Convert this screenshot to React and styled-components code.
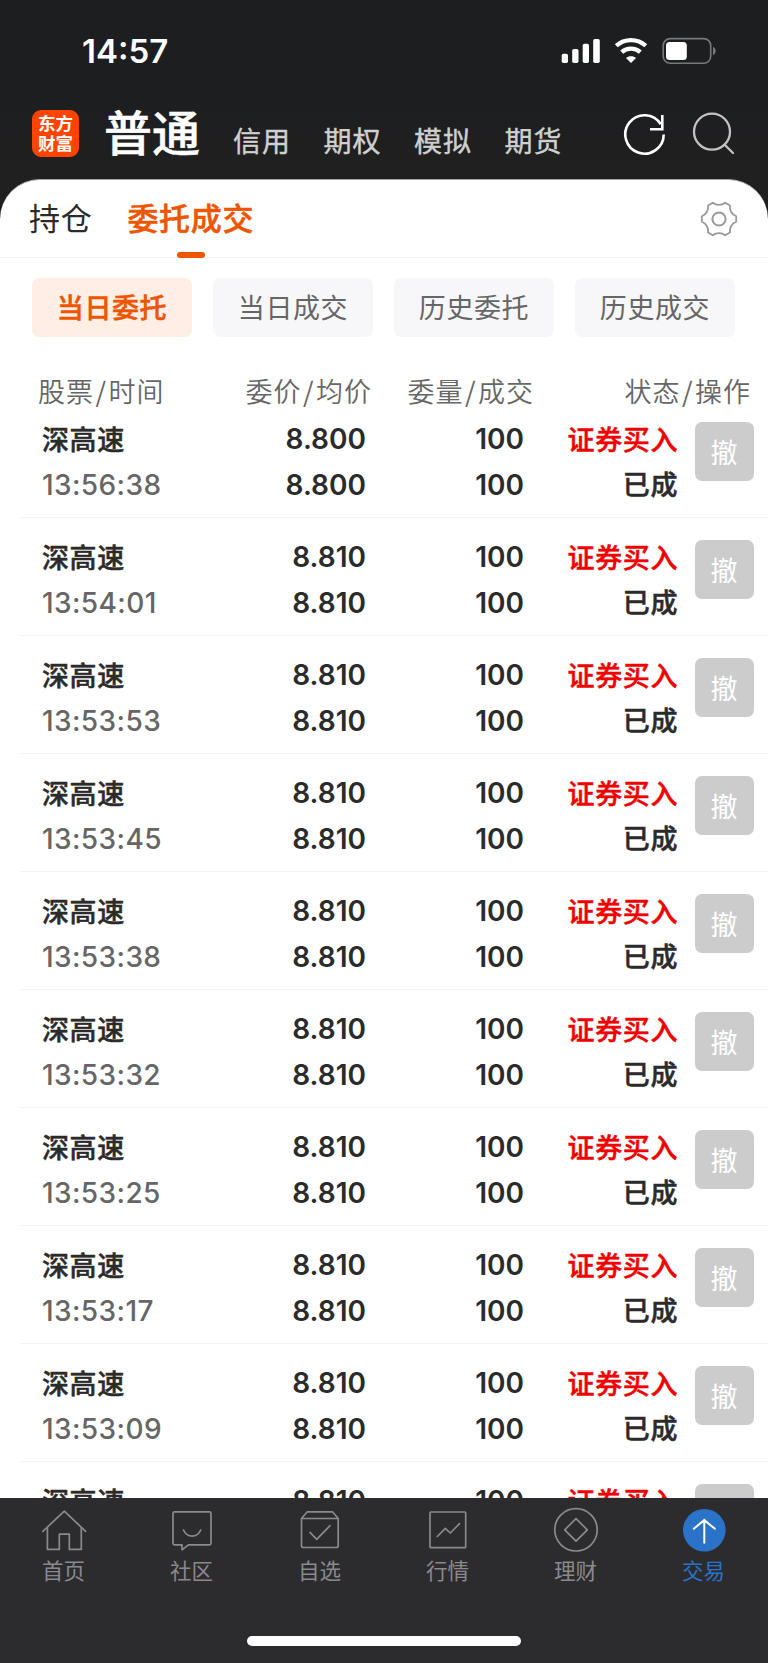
import React from "react";
import styled, { createGlobalStyle, css } from "styled-components";

const orders = [
  { time: "13:56:38", price: "8.800" },
  { time: "13:54:01", price: "8.810" },
  { time: "13:53:53", price: "8.810" },
  { time: "13:53:45", price: "8.810" },
  { time: "13:53:38", price: "8.810" },
  { time: "13:53:32", price: "8.810" },
  { time: "13:53:25", price: "8.810" },
  { time: "13:53:17", price: "8.810" },
  { time: "13:53:09", price: "8.810" },
  { time: "13:53:02", price: "8.810" },
];

const markets = ["信用", "期权", "模拟", "期货"];
const filters = ["当日委托", "当日成交", "历史委托", "历史成交"];
const columns = [
  ["股票", "时间"],
  ["委价", "均价"],
  ["委量", "成交"],
  ["状态", "操作"],
];

const tabs = [
  {
    label: "首页",
    icon: (
      <>
        <path d="M2.9 25.3 24.3 5.2 45.6 25.3" />
        <path d="M7.4 21.8v21.6h11.9V28.2h10v15.2h12V21.8" />
      </>
    ),
  },
  {
    label: "社区",
    icon: (
      <>
        <path d="M6.5 5.8h35a1.5 1.5 0 0 1 1.5 1.5v30a1.5 1.5 0 0 1-1.5 1.5H20.4L14 43.8v-5H6.5A1.5 1.5 0 0 1 5 37.3v-30a1.5 1.5 0 0 1 1.5-1.5z" />
        <path d="M15.5 24c3.6 8.3 13.6 8.3 17.2 0" />
      </>
    ),
  },
  {
    label: "自选",
    icon: (
      <>
        <path d="M5.5 12.5v27a2 2 0 0 0 2 2h32.700a2 2 0 0 0 2-2v-27zl5.800-6.700h25.200l5.700 6.700" />
        <path d="m14 26.300 6.700 7L34 19.700" />
      </>
    ),
  },
  {
    label: "行情",
    icon: (
      <>
        <rect x="6" y="6" width="35.7" height="35.7" rx="1" />
        <path d="m13.300 30.500 8-8.200 5 4.700 9.200-9.300" />
      </>
    ),
  },
  {
    label: "理财",
    icon: (
      <>
        <circle cx="24" cy="23.8" r="21.2" />
        <path d="M24 12.600 35.300 23.900 24 35.200 12.700 23.900z" />
      </>
    ),
  },
  {
    label: "交易",
    active: true,
    icon: (
      <>
        <circle cx="24.3" cy="24.2" r="21.3" fill="#2a73c8" stroke="none" />
        <path d="M24.300 36.700V13.800M13.800 22.800l10.500-8.800 10.500 8.800" stroke="#fff" strokeWidth="2" />
      </>
    ),
  },
];

// six teeth, with a shallow curve between each pair
const gearPath = () => {
  const at = (deg, r) => {
    const a = (deg * Math.PI) / 180;
    return `${(20 + r * Math.cos(a)).toFixed(2)} ${(20 + r * Math.sin(a)).toFixed(2)}`;
  };
  let d = "";
  for (let i = 0; i < 6; i++) {
    const c = i * 60;
    d += `${i ? "L" : "M"}${at(c - 9, 17.4)}L${at(c + 9, 17.4)}`;
    d += `C${at(c + 19, 13.6)} ${at(c + 41, 13.6)} ${at(c + 51, 17.4)}`;
  }
  return d + "z";
};

const StatusBar = () => (
  <Status>
    <Clock>14:57</Clock>
    <StatusIcons width="156" height="28" viewBox="0 0 156 28">
      <g fill="#fff">
        <rect x="1.7" y="16.8" width="6.3" height="9.2" rx="1.8" />
        <rect x="12.2" y="12" width="6.3" height="14" rx="1.8" />
        <rect x="22.7" y="6.8" width="6.3" height="19.2" rx="1.8" />
        <rect x="33.2" y="2" width="6.6" height="24" rx="1.8" />
        <path d="M71 26l-5-4.900c2.700-2.600 7.300-2.600 10 0z" />
        <rect x="106" y="5" width="20.8" height="18" rx="3.5" />
      </g>
      <path d="M56.300 8.800c8.100-7.700 21.300-7.700 29.400 0M61.700 15.200c5.200-4.800 13.400-4.800 18.600 0" fill="none" stroke="#fff" strokeWidth="4.3" />
      <rect x="103.2" y="1.6" width="47.5" height="24.7" rx="7" fill="none" stroke="#77787a" strokeWidth="1.6" />
      <path d="M153 9.800c3.500 1.300 3.500 7 0 8.200z" fill="#77787a" />
    </StatusIcons>
  </Status>
);

const App = () => {
  return (
    <Screen>
      <GlobalStyle />
      <StatusBar />
      <Header>
        <Logo>
          <span>东方</span>
          <span>财富</span>
        </Logo>
        <Title>普通</Title>
        <Markets>
          {markets.map((name) => (
            <span key={name}>{name}</span>
          ))}
        </Markets>
        <HeaderIcons width="114" height="44" viewBox="0 0 114 44">
          <g fill="none" stroke="#fff" strokeWidth="2.6">
            <path d="M41.700 22.500A19.200 19.200 0 1 1 38.800 12.300" />
            <path d="M40.300 3v14.200H28" />
          </g>
          <g fill="none" stroke="#c3c3c3" strokeWidth="2.3">
            <circle cx="90" cy="19.7" r="18" />
            <path d="m102.700 32.800 8.300 8.200" strokeLinecap="round" />
          </g>
        </HeaderIcons>
      </Header>

      <Sheet>
        <TabBar>
          <Tab>持仓</Tab>
          <Tab $active>委托成交</Tab>
          <Gear width="40" height="40" viewBox="0 0 40 40">
            <path d={gearPath()} />
            <circle cx="20" cy="20" r="6.6" strokeWidth="2" />
          </Gear>
        </TabBar>

        <Filters>
          {filters.map((name, i) => (
            <Filter key={name} $active={i === 0}>
              {name}
            </Filter>
          ))}
        </Filters>

        <TableHead>
          {columns.map(([top, bottom]) => (
            <HeadCell key={top}>
              {top}
              <i>/</i>
              {bottom}
            </HeadCell>
          ))}
        </TableHead>

        <Orders>
          {orders.map((order) => (
            <Order key={order.time}>
              <Cell>
                <Name>深高速</Name>
                <Time>{order.time}</Time>
              </Cell>
              <Cell $right>
                <Num>{order.price}</Num>
                <Num>{order.price}</Num>
              </Cell>
              <Cell $right>
                <Num>100</Num>
                <Num>100</Num>
              </Cell>
              <Cell $right>
                <Name $buy>证券买入</Name>
                <Name>已成</Name>
              </Cell>
              <CancelButton>撤</CancelButton>
            </Order>
          ))}
        </Orders>
      </Sheet>

      <BottomNav>
        <NavItems>
          {tabs.map((tab) => (
            <NavItem key={tab.label} $active={tab.active}>
              <NavIcon width="48" height="48" viewBox="0 0 48 48">
                {tab.icon}
              </NavIcon>
              <span>{tab.label}</span>
            </NavItem>
          ))}
        </NavItems>
        <HomeIndicator />
      </BottomNav>
    </Screen>
  );
};

const GlobalStyle = createGlobalStyle`
  * {
    box-sizing: border-box;
  }

  body {
    margin: 0;
    background: #1d1e20;
  }
`;

// a touch heavier than the plain medium weight
const semibold = css`
  font-weight: 500;
  -webkit-text-stroke: 0.5px currentColor;
`;

const Screen = styled.div`
  width: 768px;
  height: 1663px;
  display: flex;
  flex-direction: column;
  overflow: hidden;
  background: linear-gradient(#1d1e20 90px, #202020 180px);
  font-family: "Inter", "Noto Sans CJK SC", sans-serif;
  white-space: nowrap;
`;

const Status = styled.div`
  height: 102px;
  flex: none;
  display: flex;
  align-items: center;
  justify-content: space-between;
  padding: 0 52px 0 82px;
`;

const Clock = styled.div`
  font-size: 33px;
  font-weight: 600;
  line-height: 40px;
  color: #fff;
`;

const StatusIcons = styled.svg`
  display: block;
`;

const Header = styled.header`
  height: 77px;
  flex: none;
  display: flex;
  align-items: flex-start;
  padding: 0 32px;
  font-family: "Noto Sans CJK SC", sans-serif;
`;

const Logo = styled.div`
  width: 47px;
  height: 47px;
  margin-top: 8px;
  padding-top: 3px;
  display: flex;
  flex-direction: column;
  align-items: center;
  border-radius: 9px;
  background: #ff4400;
  color: #fff;
  font-size: 17.5px;
  font-weight: 700;
  line-height: 20px;
`;

const Title = styled.h1`
  ${semibold}
  margin: -3px 0 0 25px;
  font-size: 48px;
  line-height: 62px;
  color: #fff;
`;

const Markets = styled.nav`
  display: flex;
  gap: 32.5px;
  margin: 18px 0 0 33px;
  font-size: 28px;
  line-height: 40px;
  letter-spacing: 1px;
  color: #d0d0d0;
  -webkit-text-stroke: 0.4px currentColor;
`;

const HeaderIcons = styled.svg`
  margin: 10px 0 0 auto;
`;

const Sheet = styled.main`
  flex: 1;
  min-height: 0;
  display: flex;
  flex-direction: column;
  overflow: hidden;
  border-top: 1px solid #a5a5a5;
  border-radius: 40px 40px 0 0;
  background: #fff;
`;

const TabBar = styled.div`
  height: 78px;
  flex: none;
  display: flex;
  align-items: center;
  padding: 0 29px;
  border-bottom: 1px solid #f3f3f5;
`;

const Tab = styled.div`
  position: relative;
  height: 78px;
  margin-right: 35px;
  font-family: "Noto Sans CJK SC", sans-serif;
  font-size: 31px;
  line-height: 74px;
  letter-spacing: 0.7px;
  color: #2b2b2b;

  ${(props) =>
    props.$active &&
    css`
      ${semibold}
      color: #ee5500;

      &::after {
        content: "";
        position: absolute;
        left: 50%;
        bottom: 0;
        width: 28px;
        height: 6px;
        margin-left: -14px;
        border-radius: 3px;
        background: #ee5500;
      }
    `}
`;

const Gear = styled.svg`
  margin-left: auto;
  fill: none;
  stroke: #999;
  stroke-width: 1.8;
  stroke-linejoin: round;
`;

const Filters = styled.div`
  flex: none;
  display: grid;
  grid-template-columns: repeat(4, 160px);
  gap: 21px;
  padding: 20px 32px 0;
`;

const Filter = styled.button`
  height: 59px;
  padding: 0 0 2px;
  border: none;
  border-radius: 7px;
  font-family: "Noto Sans CJK SC", sans-serif;
  font-size: 27px;
  letter-spacing: 0.6px;
  background: #f7f7fa;
  color: #666;

  ${(props) =>
    props.$active &&
    css`
      ${semibold}
      background: #ffeee5;
      color: #ee5500;
    `}
`;

const TableHead = styled.div`
  flex: none;
  display: grid;
  grid-template-columns: 171px 163px 162px 217px;
  height: 63px;
  padding: 34px 0 0 38px;
`;

const HeadCell = styled.div`
  font-family: "Noto Sans CJK SC", sans-serif;
  font-size: 27px;
  font-weight: 350;
  line-height: 40px;
  letter-spacing: 1px;
  color: #666;

  & + & {
    text-align: right;
  }

  i {
    margin: 0 1.5px;
    font-style: normal;
    font-weight: 400;
  }
`;

const Orders = styled.div`
  flex: 1;
  min-height: 0;
  overflow: hidden;
  padding-left: 20px;
`;

const Order = styled.div`
  height: 118px;
  display: grid;
  grid-template-columns: 172px 152px 158px 154px 59px;
  align-items: start;
  padding: 17px 0 0 22px;
  border-bottom: 1px solid #f3f3f3;
`;

const Cell = styled.div`
  display: flex;
  flex-direction: column;
  align-items: ${(props) => (props.$right ? "flex-end" : "flex-start")};
`;

const Name = styled.span`
  ${semibold}
  margin-bottom: 2px;
  font-family: "Noto Sans CJK SC", sans-serif;
  font-size: 27px;
  line-height: 43px;
  letter-spacing: 0.6px;
  color: ${(props) => (props.$buy ? "#f00000" : "#2b2b2b")};
`;

const Time = styled.span`
  font-size: 28px;
  font-weight: 500;
  line-height: 47px;
  letter-spacing: 0.4px;
  color: #666;
`;

const Num = styled.span`
  font-size: 28px;
  font-weight: 600;
  line-height: 45px;
  color: #2b2b2b;

  & + & {
    line-height: 47px;
  }
`;

const CancelButton = styled.button`
  width: 59px;
  height: 59px;
  margin: 5px 0 0 17px;
  padding: 0 1px 1px 0;
  border: none;
  border-radius: 7px;
  background: #ccc;
  color: #fff;
  font-family: "Noto Sans CJK SC", sans-serif;
  font-size: 27px;
`;

const BottomNav = styled.footer`
  height: 165px;
  flex: none;
  display: flex;
  flex-direction: column;
  align-items: center;
  justify-content: space-between;
  padding: 8px 0 17px;
  background: #2c2c2e;
`;

const NavItems = styled.div`
  width: 100%;
  display: grid;
  grid-template-columns: repeat(6, 1fr);
`;

const NavItem = styled.div`
  display: flex;
  flex-direction: column;
  align-items: center;
  font-family: "Noto Sans CJK SC", sans-serif;
  font-size: 21.5px;
  line-height: 32px;
  color: ${(props) => (props.$active ? "#2a73c8" : "#8a898e")};

  span {
    padding-right: 1px;
  }
`;

const NavIcon = styled.svg`
  fill: none;
  stroke: #8a898e;
  stroke-width: 1.7;
  stroke-linejoin: round;
  stroke-linecap: round;
`;

const HomeIndicator = styled.div`
  width: 274px;
  height: 10px;
  border-radius: 5px;
  background: #fff;
`;

export default App;
